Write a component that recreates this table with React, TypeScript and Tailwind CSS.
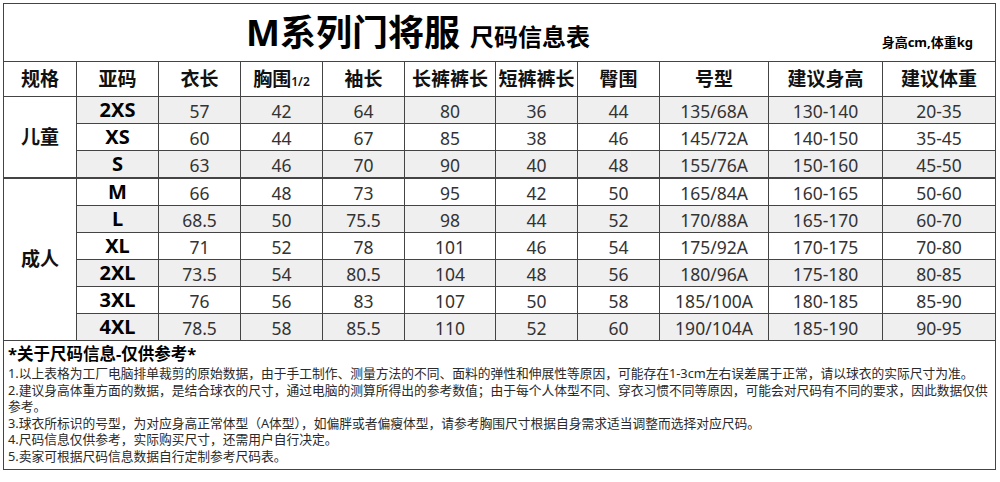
import React from "react";

const kids = [
  ["2XS", "57", "42", "64", "80", "36", "44", "135/68A", "130-140", "20-35"],
  ["XS", "60", "44", "67", "85", "38", "46", "145/72A", "140-150", "35-45"],
  ["S", "63", "46", "70", "90", "40", "48", "155/76A", "150-160", "45-50"],
];
const adults = [
  ["M", "66", "48", "73", "95", "42", "50", "165/84A", "160-165", "50-60"],
  ["L", "68.5", "50", "75.5", "98", "44", "52", "170/88A", "165-170", "60-70"],
  ["XL", "71", "52", "78", "101", "46", "54", "175/92A", "170-175", "70-80"],
  ["2XL", "73.5", "54", "80.5", "104", "48", "56", "180/96A", "175-180", "80-85"],
  ["3XL", "76", "56", "83", "107", "50", "58", "185/100A", "180-185", "85-90"],
  ["4XL", "78.5", "58", "85.5", "110", "52", "60", "190/104A", "185-190", "90-95"],
];

const headers = ["规格", "亚码", "衣长", "胸围", "袖长", "长裤裤长", "短裤裤长", "臀围", "号型", "建议身高", "建议体重"];

function Row({ r, gray, thick }: { r: string[]; gray: boolean; thick?: boolean }) {
  const bg = gray ? "bg-[#efefef]" : "bg-white";
  const bb = thick ? "border-b-2" : "border-b";
  return (
    <>
      {r.map((v, i) => (
        <div
          key={i}
          className={`${bg} ${bb} border-[#444] ${i < r.length - 1 ? "border-r" : ""} flex items-center justify-center ${
            i === 0 ? "text-[20px] font-bold text-black" : "text-[17.5px] text-[#333] pt-[2px]"
          }`}
        >
          {v}
        </div>
      ))}
    </>
  );
}

export default function App() {
  return (
    <div
      className="w-[1000px] h-[482px] bg-white pl-[3px] pt-[3px]"
      style={{ fontFamily: '"Noto Sans", "Noto Sans CJK SC", sans-serif' }}
    >
      <div className="w-[993px] border border-[#444]">
        <div className="h-[58px] border-b border-[#444] flex items-center">
          <div className="ml-[242px] flex items-baseline text-black font-bold">
            <span className="text-[36px] leading-none">M系列门将服</span>
            <span className="text-[24px] leading-none ml-[10px]">尺码信息表</span>
          </div>
          <div className="ml-auto mr-[22px] self-end mb-[12px] text-[13px] font-bold text-black leading-none">
            身高cm,体重kg
          </div>
        </div>
        <div className="grid grid-cols-[73px_82px_82px_82px_82px_91px_82px_82px_109px_114px_112px] grid-rows-[35px_27px_27px_28px_27px_27px_27px_27px_27px_27px]">
          {headers.map((h, i) => (
            <div
              key={h}
              className={`border-b border-[#444] ${i < headers.length - 1 ? "border-r" : ""} flex items-center justify-center text-[19px] font-bold text-[#111] whitespace-nowrap`}
            >
              {h}
              {i === 3 && <span className="text-[12px] font-semibold mt-[5px]">1/2</span>}
            </div>
          ))}
          <div className="row-span-3 border-r border-b-2 border-[#444] flex items-center justify-center text-[19px] font-bold text-[#111]">
            儿童
          </div>
          {kids.map((r, i) => (
            <Row key={r[0]} r={r} gray={i % 2 === 0} thick={i === 2} />
          ))}
          <div className="row-span-6 border-r border-b border-[#444] flex items-center justify-center text-[19px] font-bold text-[#111]">
            成人
          </div>
          {adults.map((r, i) => (
            <Row key={r[0]} r={r} gray={i % 2 === 1} />
          ))}
        </div>
        <div className="h-[128px] pl-[4px] pt-[2px] text-[#2a2a2a]">
          <div className="text-[16.5px] font-bold text-black leading-[22px]">*关于尺码信息-仅供参考*</div>
          <div className="text-[12.75px] leading-[16.5px] whitespace-nowrap">
            <div>1.以上表格为工厂电脑排单裁剪的原始数据，由于手工制作、测量方法的不同、面料的弹性和伸展性等原因，可能存在1-3cm左右误差属于正常，请以球衣的实际尺寸为准。</div>
            <div>2.建议身高体重方面的数据，是结合球衣的尺寸，通过电脑的测算所得出的参考数值；由于每个人体型不同、穿衣习惯不同等原因，可能会对尺码有不同的要求，因此数据仅供</div>
            <div>参考。</div>
            <div>3.球衣所标识的号型，为对应身高正常体型（A体型），如偏胖或者偏瘦体型，请参考胸围尺寸根据自身需求适当调整而选择对应尺码。</div>
            <div>4.尺码信息仅供参考，实际购买尺寸，还需用户自行决定。</div>
            <div>5.卖家可根据尺码信息数据自行定制参考尺码表。</div>
          </div>
        </div>
      </div>
    </div>
  );
}
